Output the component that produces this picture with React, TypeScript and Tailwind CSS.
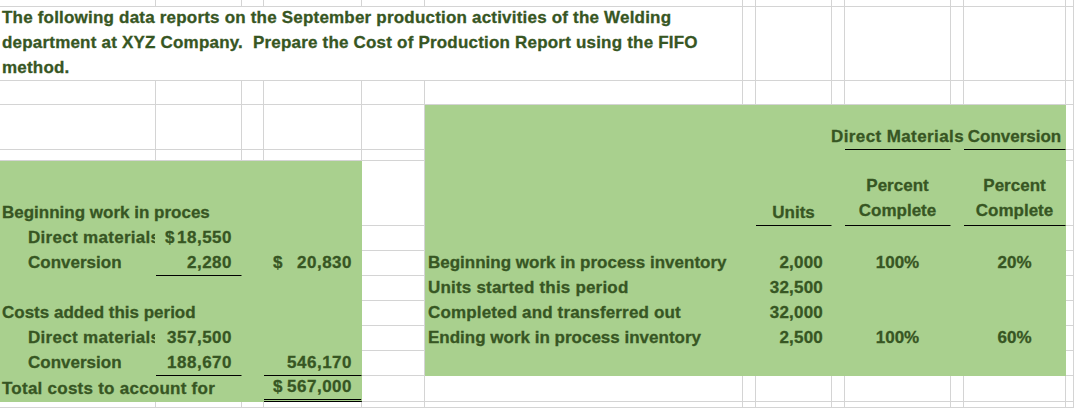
import React from 'react';

type Cell = {
  text?: React.ReactNode;
  cls?: string;
  line?: 'single' | 'double';
  clip?: boolean;
  money?: [string, string];
};

const LEFT = 'justify-start pl-[2px]';
const INDENT = 'justify-start pl-[28px]';
const RIGHT = 'justify-end pr-[9px] tracking-[0.5px]';
const CENTER = 'justify-center';
const LABEL = 'justify-start pl-[3px]';
const UNITS = 'justify-end pr-[8px] tracking-[0.2px]';

const percentComplete = (
  <div className="text-center leading-[25px] pb-0">
    Percent
    <br />
    Complete
  </div>
);

const cells: Record<string, Cell> = {
  '3-9': { text: 'Direct Materials', cls: CENTER + ' tracking-[0.4px]', line: 'single' },
  '3-11': { text: 'Conversion', cls: CENTER, line: 'single' },
  '5-0': { text: 'Beginning work in proces', cls: LEFT },
  '5-7': { text: 'Units', cls: CENTER, line: 'single' },
  '5-9': { text: percentComplete, cls: CENTER, line: 'single' },
  '5-11': { text: percentComplete, cls: CENTER, line: 'single' },
  '6-0': { text: 'Direct materials', cls: INDENT + ' tracking-[0.3px]', clip: true },
  '6-1': { money: ['$', '18,550'] },
  '7-0': { text: 'Conversion', cls: INDENT },
  '7-1': { text: '2,280', cls: RIGHT, line: 'single' },
  '7-3': { money: ['$', '20,830'] },
  '7-5': { text: 'Beginning work in process inventory', cls: LABEL },
  '7-7': { text: '2,000', cls: UNITS },
  '7-9': { text: '100%', cls: CENTER },
  '7-11': { text: '20%', cls: CENTER },
  '8-5': { text: 'Units started this period', cls: LABEL + ' tracking-[0.2px]' },
  '8-7': { text: '32,500', cls: UNITS },
  '9-0': { text: 'Costs added this period', cls: LEFT },
  '9-5': { text: 'Completed and transferred out', cls: LABEL + ' tracking-[0.15px]' },
  '9-7': { text: '32,000', cls: UNITS },
  '10-0': { text: 'Direct materials', cls: INDENT + ' tracking-[0.3px]', clip: true },
  '10-1': { text: '357,500', cls: RIGHT },
  '10-5': { text: 'Ending work in process inventory', cls: LABEL },
  '10-7': { text: '2,500', cls: UNITS },
  '10-9': { text: '100%', cls: CENTER },
  '10-11': { text: '60%', cls: CENTER },
  '11-0': { text: 'Conversion', cls: INDENT },
  '11-1': { text: '188,670', cls: RIGHT, line: 'single' },
  '11-3': { text: '546,170', cls: RIGHT, line: 'single' },
  '12-0': { text: 'Total costs to account for', cls: LEFT + ' tracking-[0.25px]' },
  '12-3': { money: ['$', '567,000'], line: 'double' },
};

const ROWS = 14;
const COLS = 13;

// green blocks: units table on the right, cost summary on the left
const isGreen = (r: number, c: number) =>
  (r >= 3 && r <= 11 && c >= 5 && c <= 11) || (r >= 5 && r <= 12 && c <= 3);

const cellClass = (r: number, c: number, cell?: Cell) => {
  if (!isGreen(r, c)) return 'border-r border-b border-[#d4d4d4] bg-white';
  if (cell?.line === 'double')
    return 'bg-[#a9d08e] border-r border-b-[3px] border-double border-r-[#a9d08e] border-b-black';
  if (cell?.line === 'single') return 'bg-[#a9d08e] border-r border-b border-r-[#a9d08e] border-b-black';
  return 'bg-[#a9d08e] border-r border-b border-[#a9d08e]';
};

export default function App() {
  const items: React.ReactNode[] = [];

  for (let r = 0; r < ROWS; r++) {
    for (let c = 0; c < COLS; c++) {
      if (r === 1 && c > 0 && c <= 5) continue;

      if (r === 1 && c === 0) {
        items.push(
          <div key="title" className="col-span-6 flex items-end border-r border-b border-[#d4d4d4] bg-white pl-[2px]">
            <div className="relative leading-[25px] whitespace-pre tracking-[0.2px]">
              The following data reports on the September production activities of the Welding
              <br />
              department at XYZ Company.  Prepare the Cost of Production Report using the FIFO
              <br />
              method.
            </div>
          </div>
        );
        continue;
      }

      const cell = cells[`${r}-${c}`];
      const base = cellClass(r, c, cell);

      if (cell?.money) {
        items.push(
          <div key={`${r}-${c}`} className={`${base} flex items-end justify-between pl-[9px] pr-[9px]`}>
            <span className="relative leading-[20px] pb-[2px]">{cell.money[0]}</span>
            <span className="relative leading-[20px] pb-[2px] tracking-[0.5px]">{cell.money[1]}</span>
          </div>
        );
        continue;
      }

      items.push(
        <div
          key={`${r}-${c}`}
          className={`${base} flex items-end ${cell?.cls ?? ''} ${cell?.clip ? 'overflow-hidden' : ''}`}
        >
          {cell?.text && (
            <span className="relative whitespace-nowrap leading-[20px] pb-[2px]">{cell.text}</span>
          )}
        </div>
      );
    }
  }

  return (
    <div className="w-[1074px] h-[408px] overflow-hidden bg-white font-['Liberation_Sans',Arial,sans-serif] text-[17px] font-bold text-[#375623] [-webkit-text-stroke:0.3px_#375623]">
      <div className="grid h-full grid-cols-[156px_86px_22px_98px_63px_318px_13px_76px_13px_106px_13px_102px_1fr] grid-rows-[7px_74px_24px_45px_11px_65px_25px_25px_25px_25px_25px_25px_26px_1fr]">
        {items}
      </div>
    </div>
  );
}
